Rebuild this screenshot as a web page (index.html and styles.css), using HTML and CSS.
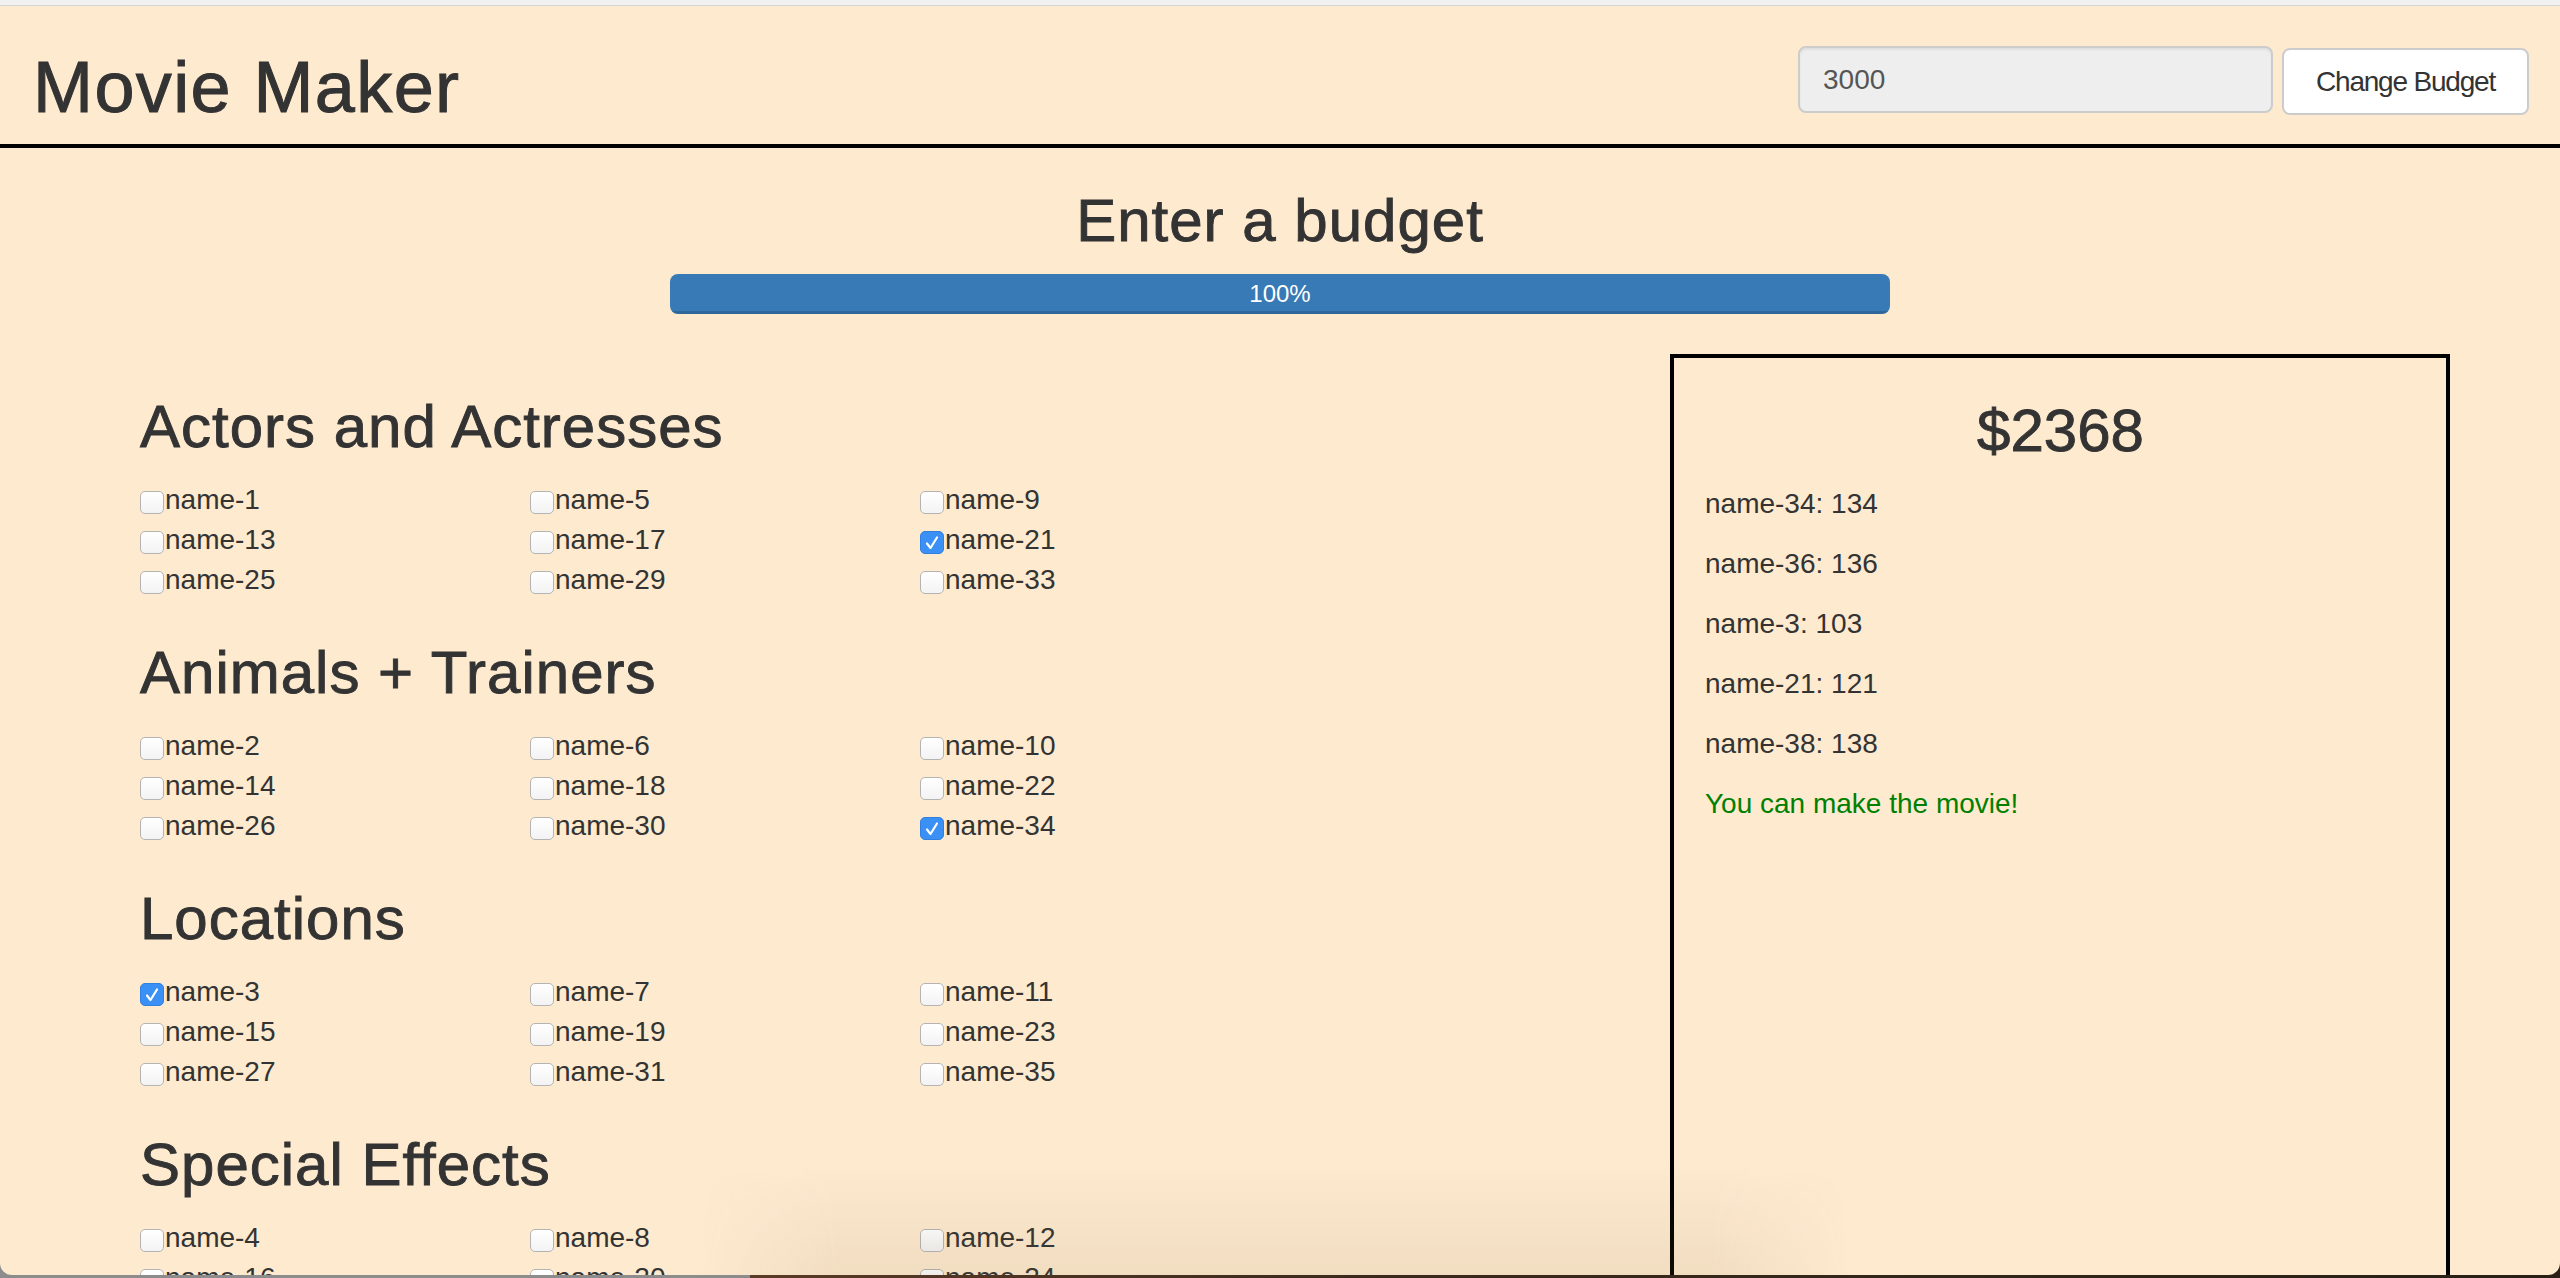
FILE: index.html
```html
<!DOCTYPE html>
<html lang="en">
<head>
<meta charset="utf-8">
<title>Movie Maker</title>
<link rel="stylesheet" href="styles.css">
</head>
<body>
<div class="window">
  <div class="chrome"></div>
  <header class="header">
    <h1 class="brand">Movie Maker</h1>
    <form class="budget-form">
      <input class="budget-input" type="text" value="3000">
      <button class="btn" type="button">Change Budget</button>
    </form>
  </header>

  <section class="intro">
    <h2 class="heading">Enter a budget</h2>
    <div class="progress"><div class="progress-bar">100%</div></div>
  </section>

  <div class="content">
    <div class="picker">
      <div class="category">
        <h2 class="heading">Actors and Actresses</h2>
        <div class="grid">
          <label class="item"><span class="cb"></span>name-1</label>
          <label class="item"><span class="cb"></span>name-5</label>
          <label class="item"><span class="cb"></span>name-9</label>
          <label class="item"><span class="cb"></span>name-13</label>
          <label class="item"><span class="cb"></span>name-17</label>
          <label class="item"><span class="cb checked"><svg viewBox="0 0 22 22" width="22" height="22"><path d="M6 11.5 L9.5 16 L16 5.5" fill="none" stroke="#fff" stroke-width="2.2" stroke-linecap="round" stroke-linejoin="round"/></svg></span>name-21</label>
          <label class="item"><span class="cb"></span>name-25</label>
          <label class="item"><span class="cb"></span>name-29</label>
          <label class="item"><span class="cb"></span>name-33</label>
        </div>
      </div>
      <div class="category">
        <h2 class="heading">Animals + Trainers</h2>
        <div class="grid">
          <label class="item"><span class="cb"></span>name-2</label>
          <label class="item"><span class="cb"></span>name-6</label>
          <label class="item"><span class="cb"></span>name-10</label>
          <label class="item"><span class="cb"></span>name-14</label>
          <label class="item"><span class="cb"></span>name-18</label>
          <label class="item"><span class="cb"></span>name-22</label>
          <label class="item"><span class="cb"></span>name-26</label>
          <label class="item"><span class="cb"></span>name-30</label>
          <label class="item"><span class="cb checked"><svg viewBox="0 0 22 22" width="22" height="22"><path d="M6 11.5 L9.5 16 L16 5.5" fill="none" stroke="#fff" stroke-width="2.2" stroke-linecap="round" stroke-linejoin="round"/></svg></span>name-34</label>
        </div>
      </div>
      <div class="category">
        <h2 class="heading">Locations</h2>
        <div class="grid">
          <label class="item"><span class="cb checked"><svg viewBox="0 0 22 22" width="22" height="22"><path d="M6 11.5 L9.5 16 L16 5.5" fill="none" stroke="#fff" stroke-width="2.2" stroke-linecap="round" stroke-linejoin="round"/></svg></span>name-3</label>
          <label class="item"><span class="cb"></span>name-7</label>
          <label class="item"><span class="cb"></span>name-11</label>
          <label class="item"><span class="cb"></span>name-15</label>
          <label class="item"><span class="cb"></span>name-19</label>
          <label class="item"><span class="cb"></span>name-23</label>
          <label class="item"><span class="cb"></span>name-27</label>
          <label class="item"><span class="cb"></span>name-31</label>
          <label class="item"><span class="cb"></span>name-35</label>
        </div>
      </div>
      <div class="category">
        <h2 class="heading">Special Effects</h2>
        <div class="grid">
          <label class="item"><span class="cb"></span>name-4</label>
          <label class="item"><span class="cb"></span>name-8</label>
          <label class="item"><span class="cb"></span>name-12</label>
          <label class="item"><span class="cb"></span>name-16</label>
          <label class="item"><span class="cb"></span>name-20</label>
          <label class="item"><span class="cb"></span>name-24</label>
          <label class="item"><span class="cb"></span>name-28</label>
          <label class="item"><span class="cb"></span>name-32</label>
          <label class="item"><span class="cb checked"><svg viewBox="0 0 22 22" width="22" height="22"><path d="M6 11.5 L9.5 16 L16 5.5" fill="none" stroke="#fff" stroke-width="2.2" stroke-linecap="round" stroke-linejoin="round"/></svg></span>name-36</label>
        </div>
      </div>
    </div>

    <aside class="panel">
      <h2 class="total">$2368</h2>
      <p class="line">name-34: 134</p>
      <p class="line">name-36: 136</p>
      <p class="line">name-3: 103</p>
      <p class="line">name-21: 121</p>
      <p class="line">name-38: 138</p>
      <p class="line ok">You can make the movie!</p>
    </aside>
  </div>

  <div class="dock-shadow"></div>
</div>
</body>
</html>
```
FILE: styles.css
```css
* { box-sizing: border-box; }

html, body {
  margin: 0;
  padding: 0;
}

body {
  height: 1278px;
  overflow: hidden;
  background: linear-gradient(to right, #8c8c8c 0, #8c8c8c 750px, #5a3b26 750px, #3a2a1c 1400px, #2a2016 100%);
  font-family: "Liberation Sans", Arial, sans-serif;
  font-size: 28px;
  line-height: 40px;
  color: #333;
}

.window {
  position: relative;
  height: 1275px;
  background: #fdeacf;
  border-radius: 0 0 12px 12px;
  overflow: hidden;
}

.chrome {
  height: 6px;
  background: #f1f1f1;
  border-bottom: 1px solid #d6d6d6;
}

.header {
  height: 142px;
  border-bottom: 4px solid #000;
  display: flex;
  justify-content: space-between;
  align-items: flex-start;
  padding: 0 31px 0 33px;
}

.brand {
  margin: 41px 0 0;
  font-size: 72px;
  line-height: 80px;
  font-weight: normal;
  letter-spacing: 1.4px;
  -webkit-text-stroke: 1px #333;
}

.budget-form {
  display: flex;
  align-items: flex-start;
  gap: 9px;
  margin: 40px 0 0;
}

.budget-input {
  width: 475px;
  height: 67px;
  background: #eeeeee;
  border: 2px solid #cccccc;
  border-radius: 8px;
  padding: 0 23px;
  font-family: inherit;
  font-size: 28px;
  color: #555;
  box-shadow: inset 0 2px 2px rgba(0, 0, 0, 0.06);
}

.btn {
  margin-top: 2px;
  width: 247px;
  height: 67px;
  background: #fff;
  border: 2px solid #cccccc;
  border-radius: 8px;
  padding: 0;
  font-family: inherit;
  font-size: 28px;
  letter-spacing: -1.2px;
  color: #333;
}

.heading {
  margin: 40px 0 20px;
  font-size: 60px;
  line-height: 66px;
  font-weight: normal;
  letter-spacing: 1px;
  -webkit-text-stroke: 0.9px #333;
}

.intro {
  text-align: center;
}

.progress {
  width: 1220px;
  height: 40px;
  margin: 0 auto 40px;
  border-radius: 8px;
  overflow: hidden;
  background: #f5f5f5;
}

.progress-bar {
  width: 100%;
  height: 40px;
  background: #377ab5;
  box-shadow: inset 0 -3px 0 rgba(0, 0, 0, 0.15);
  color: #fff;
  font-size: 24px;
  line-height: 40px;
  text-align: center;
}

.content {
  display: flex;
  align-items: flex-start;
  padding-left: 140px;
}

.picker {
  width: 1530px;
}

.grid {
  display: grid;
  grid-template-columns: repeat(3, 390px);
}

.item {
  display: flex;
  align-items: flex-start;
  height: 40px;
}

.cb {
  width: 24px;
  height: 23px;
  margin-top: 11px;
  margin-right: 1px;
  border: 1px solid #b4b4b4;
  border-radius: 5px;
  background: linear-gradient(#ffffff, #f3f3f3);
  display: flex;
  align-items: center;
  justify-content: center;
  flex: none;
}

.cb.checked {
  background: #3a90f5;
  border-color: #3180e0;
}

.cb svg {
  display: block;
}

.panel {
  width: 780px;
  height: 1000px;
  border: 4px solid #000;
  padding: 0 30px 0 31px;
}

.total {
  margin: 40px 0 20px;
  font-size: 60px;
  line-height: 66px;
  font-weight: normal;
  text-align: center;
  -webkit-text-stroke: 0.9px #333;
}

.line {
  margin: 0 0 20px;
}

.ok {
  color: #008000;
}

.dock-shadow {
  position: absolute;
  left: 700px;
  bottom: 0;
  width: 1150px;
  height: 110px;
  background: linear-gradient(to top, rgba(140, 110, 70, 0.10), rgba(140, 110, 70, 0));
  -webkit-mask-image: linear-gradient(to right, transparent 0, #000 12%, #000 88%, transparent 100%);
  mask-image: linear-gradient(to right, transparent 0, #000 12%, #000 88%, transparent 100%);
  pointer-events: none;
}
```
